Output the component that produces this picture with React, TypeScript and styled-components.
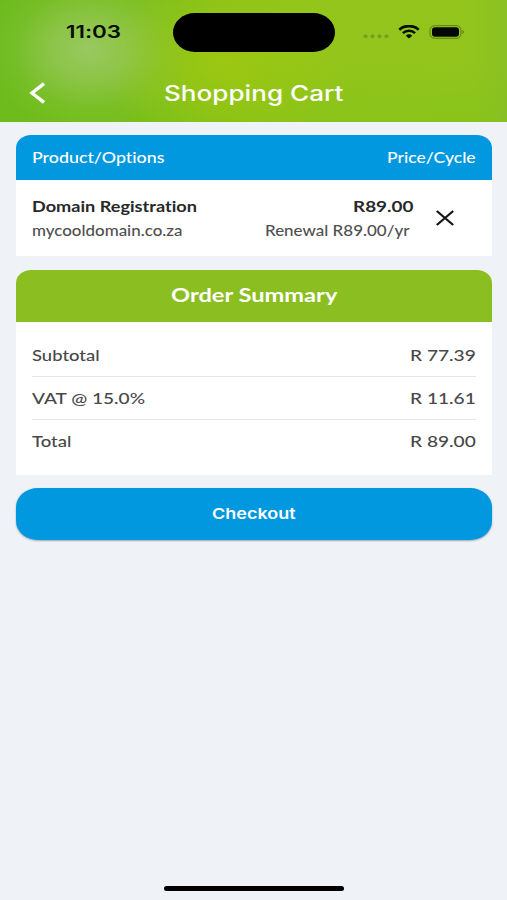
import React, { useLayoutEffect, useRef, useState } from "react";
import styled, { createGlobalStyle, css } from "styled-components";

const GlobalStyle = createGlobalStyle`
  *, *::before, *::after { box-sizing: border-box; }
  html, body { margin: 0; padding: 0; background: #eff3f8; }
  button { font: inherit; border: 0; padding: 0; background: none; cursor: pointer; }
`;

const Screen = styled.div`
  width: 507px;
  height: 900px;
  display: flex;
  flex-direction: column;
  overflow: hidden;
  background: #eff3f8;
  color: #484848;
  font-family: Lato, "Open Sans", sans-serif;
  font-variant-ligatures: none;
`;

const Header = styled.header`
  flex: none;
  height: 122px;
  background:
    radial-gradient(ellipse 105px 82px at 88px 50px, rgba(160, 202, 108, 0.85) 0%, rgba(158, 202, 100, 0.6) 35%, rgba(150, 200, 80, 0.18) 72%, rgba(150, 200, 80, 0) 100%),
    radial-gradient(ellipse 120px 90px at 225px 62px, rgba(160, 200, 15, 0.85) 0%, rgba(158, 200, 16, 0.5) 45%, rgba(155, 199, 18, 0) 100%),
    linear-gradient(90deg, rgba(140, 200, 40, 0) 93%, rgba(134, 190, 40, 0.6) 100%),
    linear-gradient(180deg, rgba(110, 190, 20, 0) 50%, rgba(110, 190, 18, 0.25) 100%),
    linear-gradient(90deg, #6cbb1e 0%, #76bd1d 22%, #88c21b 42%, #93c51b 60%, #92c51d 100%);
`;

const StatusBar = styled.div`
  height: 64px;
  padding: 0 42px 0 66px;
  display: grid;
  grid-template-columns: 107px 162px 1fr;
  align-items: center;
  color: #071000;
  font-family: Inter, sans-serif;
`;

const Island = styled.div`
  height: 39px;
  border-radius: 22px / 19.5px;
  background: #000;
`;

const StatusIcons = styled.div`
  display: flex;
  align-items: center;
  justify-content: flex-end;
  gap: 9px;

  svg { display: block; }
`;

const NavBar = styled.div`
  height: 58px;
  display: grid;
  grid-template-columns: 73px 1fr 73px;
  align-items: center;
  justify-items: center;
  color: #fff;
  font-family: Inter, sans-serif;
`;

const BackButton = styled.button`
  color: #fff;
  display: flex;

  svg { display: block; }
`;

const Title = styled.h1`
  margin: 1px 0 0;
`;

const Content = styled.main`
  flex: 1;
  padding: 13px 15.5px 0 16px;
`;

const Card = styled.section<{ $height: number; $gap: number }>`
  height: ${({ $height }) => $height}px;
  margin-bottom: ${({ $gap }) => $gap}px;
  border-radius: 15px 15px 0 0 / 13px 13px 0 0;
  overflow: hidden;
  background: #fff;
`;

const CardHeader = styled.div<{ $tone: "blue" | "green" }>`
  display: flex;
  align-items: center;
  padding: 0 16px 2px;
  color: #fff;
  ${({ $tone }) =>
    $tone === "blue"
      ? css`height: 45px; justify-content: space-between; background: #0298df;`
      : css`height: 51.5px; justify-content: center; background: #8bbe20;`}
`;

const ProductRow = styled.div`
  height: 76px;
  padding: 0 37px 0 16px;
  display: grid;
  grid-template-columns: 1fr auto 41px;
  align-items: center;
`;

const Lines = styled.div<{ $end?: boolean }>`
  height: 49px;
  margin-top: 1px;
  display: flex;
  flex-direction: column;
  justify-content: space-between;
  align-items: ${({ $end }) => ($end ? "flex-end" : "flex-start")};
`;

const RenewalLine = styled.div`
  padding-right: 4px;
`;

const RemoveButton = styled.button`
  display: flex;
  justify-self: end;
  color: #161616;
`;

const SummaryRows = styled.div`
  padding: 11.5px 16px 0;
`;

const SummaryRow = styled.div`
  height: 43px;
  display: flex;
  align-items: center;
  justify-content: space-between;

  & + & {
    border-top: 1px solid #e6e7e8;
  }
`;

const Checkout = styled.button`
  width: 100%;
  height: 52px;
  display: flex;
  align-items: center;
  justify-content: center;
  border-radius: 22px / 19px;
  background: #0298df;
  box-shadow: 0 1px 2px rgba(30, 55, 80, 0.4);
  color: #fff;
  font-family: Inter, sans-serif;
`;

const HomeIndicator = styled.div`
  flex: none;
  align-self: center;
  width: 180px;
  height: 5px;
  margin: 0 0 9px 1px;
  border-radius: 3px;
  background: #000;
`;

const LabelBox = styled.span<{ $width: number; $size: number; $weight: number; $color?: string }>`
  display: block;
  width: ${({ $width }) => $width}px;
  height: 24px;
  line-height: 24px;
  text-align: left;
  white-space: nowrap;
  font-size: ${({ $size }) => $size}px;
  font-weight: ${({ $weight }) => $weight};
  color: ${({ $color }) => $color ?? "inherit"};
`;

const LabelText = styled.span`
  display: inline-block;
  transform-origin: left center;
`;

type LabelProps = { width: number; size: number; weight?: number; color?: string; children: string };

/** A single line of text in the wide app face, expanded to a set measure. */
function Label({ width, size, weight = 500, color, children }: LabelProps) {
  const ref = useRef<HTMLSpanElement>(null);
  const [scale, setScale] = useState(1);
  useLayoutEffect(() => {
    const natural = ref.current?.offsetWidth;
    if (natural) setScale(width / natural);
  }, [width, children]);
  return (
    <LabelBox $width={width} $size={size} $weight={weight} $color={color}>
      <LabelText ref={ref} style={{ transform: `scaleX(${scale})` }}>{children}</LabelText>
    </LabelBox>
  );
}

const Dots = () => (
  <svg width="26" height="14" viewBox="0 0 26 14" fill="#74a01b">
    <circle cx="2.5" cy="11.2" r="2" />
    <circle cx="9.5" cy="11.2" r="2" />
    <circle cx="16.5" cy="11.2" r="2" />
    <circle cx="23.5" cy="11.2" r="2" />
  </svg>
);

const Wifi = () => (
  <svg width="22" height="14" viewBox="0 0 22 14" fill="none" stroke="#071000">
    <path d="M1.3 4.7C6.5-.2 15.5-.2 20.7 4.7" strokeWidth="2.7" />
    <path d="M4.9 8.1C8.3 5 13.7 5 17.1 8.1" strokeWidth="2.5" />
    <path d="M11 13.6 7.8 10.7Q11 8 14.2 10.7Z" fill="#071000" stroke="none" />
  </svg>
);

const Battery = () => (
  <svg width="36" height="14" viewBox="0 0 36 14">
    <rect x="1" y=".7" width="31" height="12.6" rx="4.5" fill="none" stroke="#5f7d18" strokeWidth="1" />
    <rect x="3" y="2.3" width="27" height="9.4" rx="3" fill="#050800" />
    <path d="M33.4 5v4c1.8-.7 1.8-3.3 0-4Z" fill="#5f7d18" />
  </svg>
);

const rows = [
  { label: "Subtotal", width: 68, amount: "R 77.39" },
  { label: "VAT @ 15.0%", width: 113, amount: "R 11.61" },
  { label: "Total", width: 39, amount: "R 89.00" },
];

export default function App() {
  return (
    <>
      <GlobalStyle />
      <Screen>
        <Header>
          <StatusBar>
            <Label width={55} size={17.5} weight={600}>11:03</Label>
            <Island />
            <StatusIcons>
              <Dots />
              <Wifi />
              <Battery />
            </StatusIcons>
          </StatusBar>
          <NavBar>
            <BackButton aria-label="Back">
              <svg width="18" height="24" viewBox="0 0 18 24" fill="none" stroke="currentColor" strokeWidth="3.4">
                <path d="M16 2.6 4 12 16 21.4" />
              </svg>
            </BackButton>
            <Title>
              <Label width={179} size={21} weight={500}>Shopping Cart</Label>
            </Title>
          </NavBar>
        </Header>
        <Content>
          <Card $height={121} $gap={14}>
            <CardHeader $tone="blue">
              <Label width={132.5} size={15.2}>Product/Options</Label>
              <Label width={89} size={15.2}>Price/Cycle</Label>
            </CardHeader>
            <ProductRow>
              <Lines>
                <Label width={165} size={15.6} weight={700} color="#282828">Domain Registration</Label>
                <Label width={150.5} size={14.4} color="#505050">mycooldomain.co.za</Label>
              </Lines>
              <Lines $end>
                <Label width={60.5} size={15.6} weight={700} color="#282828">R89.00</Label>
                <RenewalLine>
                  <Label width={145} size={14.4} color="#505050">Renewal R89.00/yr</Label>
                </RenewalLine>
              </Lines>
              <RemoveButton aria-label="Remove item">
                <svg width="20" height="18" viewBox="0 0 20 18" stroke="currentColor" strokeWidth="2.3">
                  <path d="M1.8 2 18.2 16M18.2 2 1.8 16" />
                </svg>
              </RemoveButton>
            </ProductRow>
          </Card>
          <Card $height={205} $gap={13}>
            <CardHeader $tone="green">
              <Label width={166} size={19.5} weight={700}>Order Summary</Label>
            </CardHeader>
            <SummaryRows>
              {rows.map((row) => (
                <SummaryRow key={row.label}>
                  <Label width={row.width} size={15.2}>{row.label}</Label>
                  <Label width={65.5} size={15.2}>{row.amount}</Label>
                </SummaryRow>
              ))}
            </SummaryRows>
          </Card>
          <Checkout>
            <Label width={84} size={15} weight={600}>Checkout</Label>
          </Checkout>
        </Content>
        <HomeIndicator />
      </Screen>
    </>
  );
}
